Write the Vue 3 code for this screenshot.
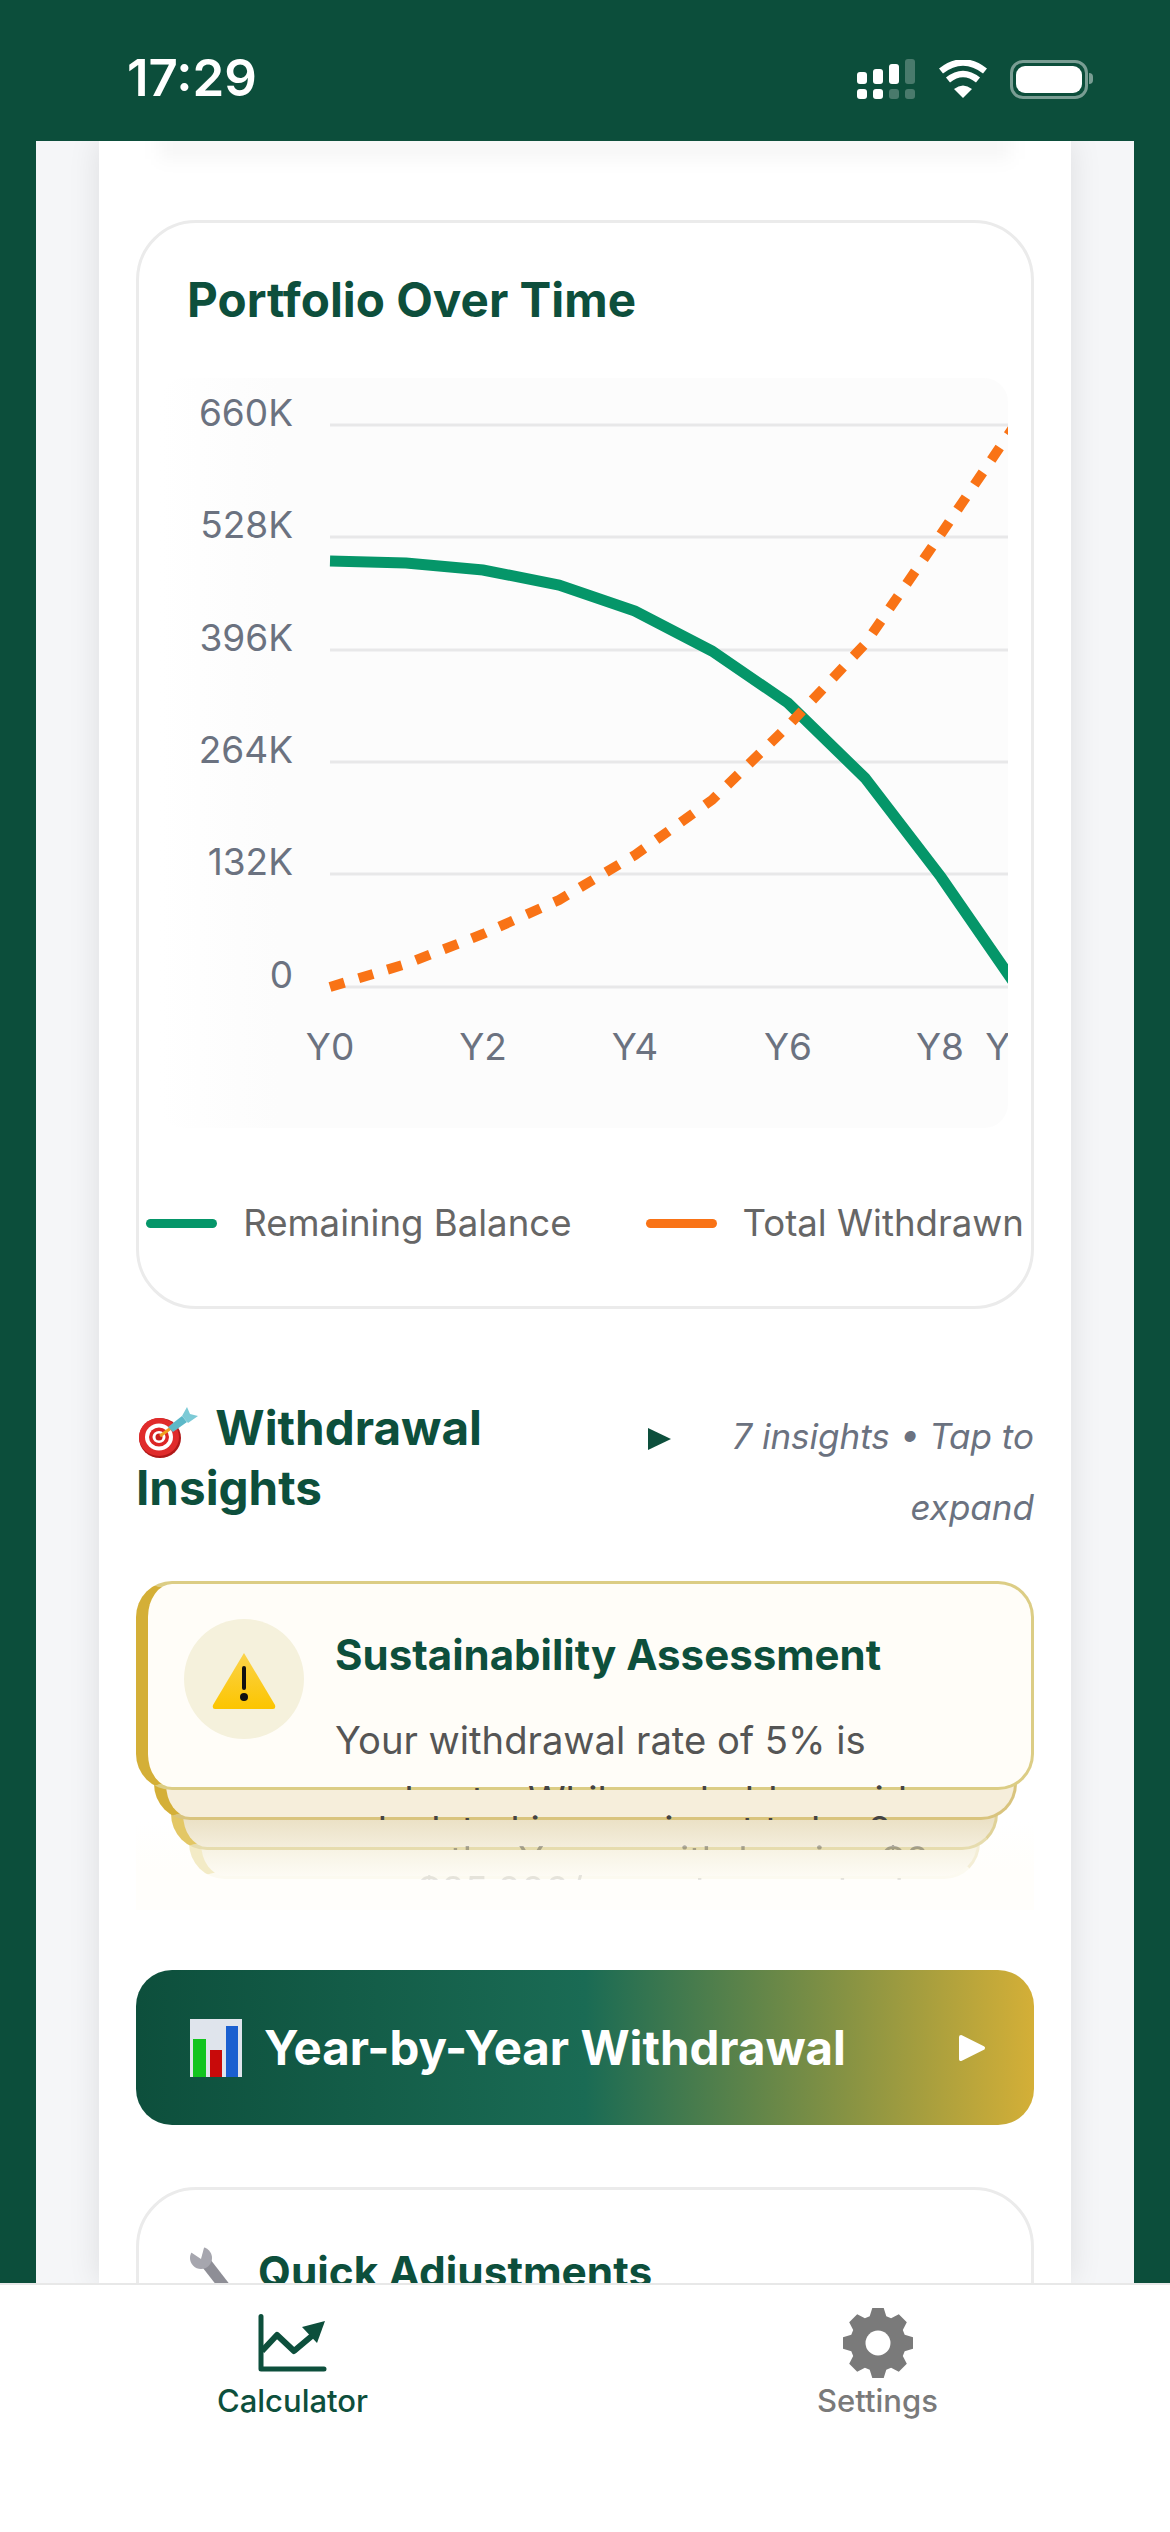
<script setup>
const yTicks = [
  { label: '660K', y: 47 },
  { label: '528K', y: 159 },
  { label: '396K', y: 272 },
  { label: '264K', y: 384 },
  { label: '132K', y: 496 },
  { label: '0', y: 609 }
]
const xTicks = [
  { label: 'Y0', x: 170 },
  { label: 'Y2', x: 323 },
  { label: 'Y4', x: 475 },
  { label: 'Y6', x: 628 },
  { label: 'Y8', x: 780 },
  { label: 'Y10', x: 857 }
]
const balance = '170,183 246,185 323,192 399,207 475,233 552,273 628,325 705,400 781,499 857,609'
const withdrawn = '170,609 246,586 323,556 399,522 475,477 552,422 628,348 705,266 781,156 857,44'

// 8 tooth cog, center 36,36
function gearPath() {
  const pts = []
  for (let i = 0; i < 8; i++) {
    const a = (i * Math.PI) / 4 - Math.PI / 2
    const at = (r, d) => {
      const t = a + d
      return `${(36 + r * Math.cos(t)).toFixed(1)},${(36 + r * Math.sin(t)).toFixed(1)}`
    }
    pts.push(at(28, -0.3), at(35.5, -0.16), at(35.5, 0.16), at(28, 0.3))
  }
  return `M${pts.join(' L')} Z`
}
const gear = gearPath()
</script>

<template>
  <div class="phone">
    <header class="status">
      <span class="time">17:29</span>
      <div class="status-icons">
        <svg width="60" height="42" viewBox="0 0 60 42">
          <g fill="#fff">
            <rect x="1" y="14" width="10" height="12" rx="3" />
            <rect x="17" y="11" width="10" height="15" rx="3" />
            <rect x="33" y="6" width="10" height="20" rx="3" />
            <rect x="49" y="1" width="10" height="25" rx="3" opacity=".25" />
            <rect x="1" y="31" width="10" height="10" rx="3" />
            <rect x="17" y="31" width="10" height="10" rx="3" />
            <rect x="33" y="31" width="10" height="10" rx="3" opacity=".25" />
            <rect x="49" y="31" width="10" height="10" rx="3" opacity=".25" />
          </g>
        </svg>
        <svg width="50" height="38" viewBox="0 0 50 38">
          <path d="M25 38 L16 29 Q25 22 34 29 Z" fill="#fff" />
          <path d="M10 20 Q25 8 40 20" fill="none" stroke="#fff" stroke-width="6.5" />
          <path d="M3 11 Q25 -6 47 11" fill="none" stroke="#fff" stroke-width="6.5" />
        </svg>
        <div class="battery"><span class="battery-fill"></span></div>
      </div>
    </header>

    <div class="stage">
      <main class="panel">
        <section class="card chart-card">
          <h2 class="card-title">Portfolio Over Time</h2>
          <svg class="chart" width="848" height="750" viewBox="0 0 848 750">
            <defs>
              <linearGradient id="plot" x1="0" y1="0" x2="1" y2="0">
                <stop offset="0" stop-color="#fff" />
                <stop offset="0.14" stop-color="#fcfcfc" />
              </linearGradient>
            </defs>
            <rect width="848" height="750" rx="24" fill="url(#plot)" />
            <line
              v-for="t in yTicks"
              :key="t.label"
              x1="170"
              x2="848"
              :y1="t.y"
              :y2="t.y"
              stroke="#e8e8e9"
              stroke-width="3"
            />
            <text
              v-for="t in yTicks"
              :key="'y' + t.label"
              x="133"
              :y="t.y + 1"
              text-anchor="end"
              class="axis"
            >{{ t.label }}</text>
            <text
              v-for="t in xTicks"
              :key="t.label"
              :x="t.x"
              y="682"
              text-anchor="middle"
              class="axis"
            >{{ t.label }}</text>
            <polyline :points="balance" fill="none" stroke="#059669" stroke-width="11" />
            <polyline
              :points="withdrawn"
              fill="none"
              stroke="#f97316"
              stroke-width="10"
              stroke-dasharray="15 15"
            />
          </svg>
          <div class="legend">
            <div class="legend-item">
              <span class="legend-line green"></span>
              <span>Remaining Balance</span>
            </div>
            <div class="legend-item">
              <span class="legend-line orange"></span>
              <span>Total Withdrawn</span>
            </div>
          </div>
        </section>

        <section class="insights-head">
          <h2 class="insights-title">
            <svg class="target" width="60" height="51" viewBox="0 0 60 51">
              <ellipse cx="22" cy="31" rx="21" ry="20" fill="#b01818" />
              <ellipse cx="21" cy="30" rx="20" ry="19" fill="#e02b2b" />
              <ellipse cx="21" cy="30" rx="14" ry="13.5" fill="#fff" />
              <ellipse cx="21" cy="30" rx="10" ry="9.5" fill="#dc2626" />
              <ellipse cx="21" cy="30" rx="6.5" ry="6" fill="#fff" />
              <circle cx="21" cy="30" r="3.5" fill="#c81e1e" />
              <path d="M22 29 L33 21" stroke="#f0a020" stroke-width="3" />
              <path d="M30 20 L44 9 L49 15 L35 25 Z" fill="#5cb8c8" />
              <path d="M44 9 L49 0 L52 7 L60 9 L50 16 Z" fill="#7ccad6" />
            </svg>
            Withdrawal Insights
          </h2>
          <span class="caret"></span>
          <p class="insights-sub">7 insights • Tap to expand</p>
        </section>

        <section class="stack">
          <div class="layer layer-3"></div>
          <div class="layer layer-2"></div>
          <div class="layer layer-1"></div>
          <article class="insight">
            <div class="insight-icon">
              <svg width="66" height="58" viewBox="0 0 66 58">
                <defs>
                  <linearGradient id="warn" x1="0" y1="0" x2="0" y2="1">
                    <stop offset="0" stop-color="#fbd34a" />
                    <stop offset="1" stop-color="#fcc500" />
                  </linearGradient>
                </defs>
                <path d="M33 2 L64 54 Q65 58 62 58 L4 58 Q1 58 2 54 Z" fill="url(#warn)" />
                <rect x="31" y="15" width="4" height="24" rx="2" fill="#111" />
                <circle cx="33" cy="46" r="4" fill="#111" />
              </svg>
            </div>
            <div class="insight-body">
              <h3>Sustainability Assessment</h3>
              <p>Your withdrawal rate of 5% is</p>
            </div>
          </article>
          <div class="peek peek-1"><span>moderate. While probably avoid</span></div>
          <div class="peek peek-2"><span>calculated in your input to be 0</span></div>
          <div class="peek peek-3"><span>over the Y-year withdrawing $0</span></div>
          <div class="peek peek-4"><span>$25,000/year at a constant</span></div>
        </section>

        <button type="button" class="year-btn">
          <svg width="52" height="58" viewBox="0 0 52 58">
            <rect width="52" height="58" fill="#dfe4ec" />
            <rect x="3" y="20" width="13" height="38" fill="#12c41f" />
            <rect x="20" y="31" width="12" height="27" fill="#c80a0a" />
            <rect x="36" y="7" width="12" height="51" fill="#1a5fd0" />
          </svg>
          <span class="year-label">Year-by-Year Withdrawal</span>
          <svg width="28" height="28" viewBox="0 0 28 28">
            <path d="M3 3 L25 14 L3 25 Z" fill="#fff" stroke="#fff" stroke-width="4" stroke-linejoin="round" />
          </svg>
        </button>

        <section class="card adjust-card">
          <h2 class="card-title adjust-title">
            <svg class="wrench" width="44" height="70" viewBox="0 0 44 70">
              <path d="M14 12 L56 66" stroke="#8e8e96" stroke-width="11" />
              <circle cx="12" cy="11" r="11" fill="#a6a6ae" />
              <path d="M12 12 L0 4 L6 -3 L16 -3 Z" fill="#fff" />
            </svg>
            Quick Adjustments
          </h2>
        </section>
      </main>
    </div>

    <nav class="tabs">
      <div class="tab active">
        <svg width="72" height="60" viewBox="0 0 72 60">
          <path d="M3 2.5 V55 H66" fill="none" stroke="#0d4f3c" stroke-width="5" stroke-linecap="round" stroke-linejoin="round" />
          <path d="M4 37 L19 21 L36 37 L55 21" fill="none" stroke="#0d4f3c" stroke-width="6" stroke-linejoin="round" />
          <path d="M44 13 L67 7 L59 29 Z" fill="#0d4f3c" />
        </svg>
        <span>Calculator</span>
      </div>
      <div class="tab">
        <svg width="72" height="72" viewBox="0 0 72 72">
          <path :d="gear" fill="#7a7a7a" />
          <circle cx="36" cy="36" r="12.5" fill="#fff" />
        </svg>
        <span>Settings</span>
      </div>
    </nav>
  </div>
</template>

<style>
body {
  background: #0c4e3b;
}
</style>

<style scoped>
* {
  box-sizing: border-box;
}

.phone {
  width: 1170px;
  height: 2532px;
  display: flex;
  flex-direction: column;
  overflow: hidden;
  background: #0c4e3b;
  font-family: Inter, 'Noto Sans', sans-serif;
}

.status {
  height: 141px;
  flex: none;
  display: flex;
  justify-content: space-between;
  align-items: flex-start;
  padding: 50px 82px 0 127px;
}

.time {
  color: #fff;
  font-size: 51px;
  line-height: 56px;
  font-weight: 600;
}

.status-icons {
  display: flex;
  align-items: center;
  gap: 22px;
  padding-top: 8px;
}

.battery {
  position: relative;
  width: 78px;
  height: 39px;
  padding: 3px;
  border: 3px solid rgba(255, 255, 255, 0.45);
  border-radius: 13px;
}

.battery::after {
  content: '';
  position: absolute;
  right: -8px;
  top: 10px;
  width: 4px;
  height: 11px;
  background: rgba(255, 255, 255, 0.45);
  border-radius: 0 4px 4px 0;
}

.battery-fill {
  display: block;
  width: 100%;
  height: 100%;
  background: #fff;
  border-radius: 9px;
}

.stage {
  flex: 1;
  min-height: 0;
  margin: 0 36px;
  padding: 0 63px;
  background: #f5f6f8;
  overflow: hidden;
}

.panel {
  position: relative;
  height: 100%;
  padding: 79px 37px 0;
  background: #fff;
  box-shadow: 0 0 30px rgba(0, 0, 0, 0.1);
}

.panel::before {
  content: '';
  position: absolute;
  left: 60px;
  right: 60px;
  top: -12px;
  height: 30px;
  background: rgba(0, 0, 0, 0.035);
  filter: blur(9px);
}

.card {
  border: 3px solid #ebebeb;
  border-radius: 60px;
  background: #fff;
}

.card-title {
  margin: 0;
  color: #0d4f3c;
  font-size: 47.6px;
  line-height: 58px;
  font-weight: 700;
}

.chart-card {
  height: 1089px;
  padding: 48px 0 0 48px;
}

.chart {
  display: block;
  margin: 49px 0 0 -27px;
}

.axis {
  font-size: 37px;
  fill: #6b7280;
}

.legend {
  display: flex;
  justify-content: center;
  gap: 74px;
  margin: 73px 0 0 -48px;
  font-size: 36.6px;
  line-height: 44px;
  color: #666;
  white-space: nowrap;
}

.legend-item {
  display: flex;
  align-items: center;
  gap: 26px;
}

.legend-line {
  width: 71px;
  height: 9px;
  border-radius: 5px;
}

.green {
  background: #059669;
}

.orange {
  background: #f97316;
}

.insights-head {
  display: flex;
  align-items: flex-start;
  margin-top: 85px;
}

.insights-title {
  flex: none;
  width: 490px;
  margin: 4px 0 0;
  color: #0d4f3c;
  font-size: 47.6px;
  line-height: 60px;
  font-weight: 700;
}

.target {
  position: relative;
  top: 0;
  vertical-align: -13px;
  margin: 0 6px 0 2px;
}

.caret {
  flex: none;
  width: 0;
  height: 0;
  margin: 34px 0 0 22px;
  border-left: 23px solid #0d4f3c;
  border-top: 11px solid transparent;
  border-bottom: 11px solid transparent;
}

.insights-sub {
  flex: 1;
  margin: 7px 0 0;
  color: #6b7280;
  font-size: 35px;
  line-height: 71px;
  font-style: italic;
  text-align: right;
}

.stack {
  position: relative;
  height: 329px;
  margin-top: 38px;
  background: linear-gradient(180deg, transparent 0 240px, #fffefb 290px);
}

.layer {
  position: absolute;
  top: 0;
  border: 3px solid #d9c47e;
  border-left: 12px solid #d4af37;
  border-radius: 36px;
}

.layer-1 {
  left: 18px;
  right: 17px;
  height: 239px;
  background: #f6eedb;
}

.layer-2 {
  left: 35px;
  right: 36px;
  height: 269px;
  border-color: #e6dcae #e0d298 #e6dcae #e3c765;
  background: linear-gradient(180deg, #ebe1c6 236px, #f4eedc);
}

.layer-3 {
  left: 53px;
  right: 54px;
  height: 298px;
  border-color: #f4eed6 #f4eed6 #fcfaf0 #f3ebc6;
  background: linear-gradient(180deg, #f7f3e4 266px, #fdfbf4);
}

.peek {
  position: absolute;
  height: 5px;
  overflow: hidden;
  font-size: 38.2px;
  line-height: 50px;
  color: #444;
  white-space: nowrap;
}

.peek span {
  display: block;
  margin-top: -10px;
}

.peek-1 {
  left: 198px;
  top: 204px;
}

.peek-2 {
  left: 198px;
  top: 234px;
}

.peek-3 {
  left: 224px;
  top: 264px;
  opacity: 0.4;
}

.peek-4 {
  left: 281px;
  top: 294px;
  opacity: 0.12;
}

.insight {
  position: relative;
  display: flex;
  gap: 31px;
  height: 209px;
  padding: 35px 30px 0 36px;
  background: #fffdf8;
  border: 3px solid #dccd85;
  border-left: 12px solid #d4af37;
  border-radius: 36px;
}

.insight-icon {
  flex: none;
  width: 120px;
  height: 120px;
  display: grid;
  place-items: center;
  padding-top: 2px;
  border-radius: 50%;
  background: #f5f1dc;
}

.insight-body h3 {
  margin: 11px 0 0;
  color: #0d4f3c;
  font-size: 42px;
  line-height: 50px;
  font-weight: 700;
}

.insight-body p {
  margin: 35px 0 0;
  color: #555;
  font-size: 38.2px;
  line-height: 50px;
  white-space: nowrap;
}

.year-btn {
  width: 100%;
  height: 155px;
  display: flex;
  align-items: center;
  margin-top: 60px;
  padding: 0 48px 0 54px;
  border: 0;
  border-radius: 36px;
  color: #fff;
  font: inherit;
  background: linear-gradient(90deg, #0d4f3c 0%, #1a6b54 50%, #d4af37 100%);
}

.year-label {
  flex: 1;
  margin-left: 22px;
  text-align: left;
  font-size: 47.4px;
  font-weight: 700;
}

.adjust-card {
  height: 300px;
  margin-top: 62px;
  padding: 53px 0 0 50px;
}

.adjust-title {
  display: flex;
  gap: 25px;
  font-size: 42.4px;
}

.wrench {
  flex: none;
  margin-top: 4px;
}

.tabs {
  height: 249px;
  flex: none;
  display: grid;
  grid-template-columns: 1fr 1fr;
  padding-top: 22px;
  position: relative;
  background: #fff;
  border-top: 2px solid #e8e8e8;
}

.tab {
  display: flex;
  flex-direction: column;
  align-items: center;
  color: #7a7a7a;
  font-size: 31px;
  line-height: 40px;
  font-weight: 500;
}

.tab svg {
  display: block;
  margin-bottom: 2px;
}

.tab.active {
  color: #0d4f3c;
}

.tab.active svg {
  margin: 7px 0 7px 3px;
}
</style>
